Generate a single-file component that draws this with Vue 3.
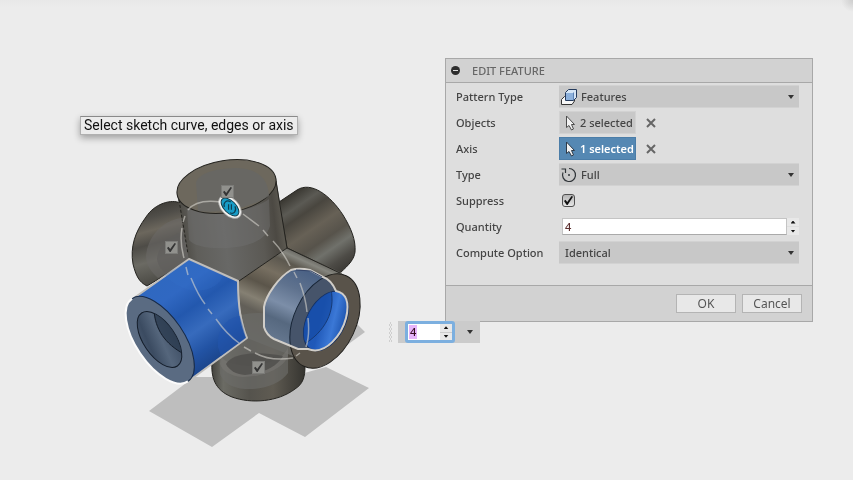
<script setup>
import { ref } from 'vue'

const patternType = ref('Features')
const distribution = ref('Full')
const computeOption = ref('Identical')
const suppress = ref(true)
const quantity = ref(4)
const instances = ref([
  { id: 'top', on: true },
  { id: 'left', on: true },
  { id: 'bottom', on: true },
])
const step = (by) => {
  quantity.value = Math.max(1, Number(quantity.value) + by)
}
</script>

<template>
  <main class="workspace">
    <section class="model" aria-label="Model view">
      <svg class="drawing" viewBox="120 150 260 305" aria-hidden="true">
        <defs>
          <linearGradient id="topSide" x1="178" y1="205" x2="284" y2="192" gradientUnits="userSpaceOnUse">
            <stop offset="0" stop-color="#4c4a44" />
            <stop offset=".12" stop-color="#5f5e5a" />
            <stop offset=".4" stop-color="#686866" />
            <stop offset=".75" stop-color="#5b5954" />
            <stop offset=".88" stop-color="#4c4943" />
            <stop offset=".96" stop-color="#5c5951" />
            <stop offset="1" stop-color="#403e38" />
          </linearGradient>
          <linearGradient id="backRight" x1="290" y1="195" x2="345" y2="275" gradientUnits="userSpaceOnUse">
            <stop offset="0" stop-color="#3a3832" />
            <stop offset=".14" stop-color="#5b5a54" />
            <stop offset=".24" stop-color="#49463f" />
            <stop offset=".42" stop-color="#676156" />
            <stop offset=".58" stop-color="#57534b" />
            <stop offset=".7" stop-color="#70716b" />
            <stop offset=".84" stop-color="#4d4b46" />
            <stop offset="1" stop-color="#35332f" />
          </linearGradient>
          <linearGradient id="backLeft" x1="150" y1="205" x2="172" y2="285" gradientUnits="userSpaceOnUse">
            <stop offset="0" stop-color="#3e3c37" />
            <stop offset=".15" stop-color="#504e49" />
            <stop offset=".3" stop-color="#6c675d" />
            <stop offset=".46" stop-color="#4e4c47" />
            <stop offset=".66" stop-color="#6b6a63" />
            <stop offset="1" stop-color="#42413c" />
          </linearGradient>
          <linearGradient id="frontRight" x1="287" y1="248" x2="247" y2="337" gradientUnits="userSpaceOnUse">
            <stop offset="0" stop-color="#6b6a64" />
            <stop offset=".05" stop-color="#85857e" />
            <stop offset=".13" stop-color="#5c584f" />
            <stop offset=".28" stop-color="#776f61" />
            <stop offset=".44" stop-color="#5b554a" />
            <stop offset=".6" stop-color="#858073" />
            <stop offset=".72" stop-color="#625f58" />
            <stop offset="1" stop-color="#666561" />
          </linearGradient>
          <linearGradient id="blueSide" x1="189" y1="259" x2="246" y2="339" gradientUnits="userSpaceOnUse">
            <stop offset="0" stop-color="#2f68c0" />
            <stop offset=".2" stop-color="#3068c2" />
            <stop offset=".42" stop-color="#2358ae" />
            <stop offset=".64" stop-color="#376bbd" />
            <stop offset=".84" stop-color="#2253a4" />
            <stop offset="1" stop-color="#1c468d" />
          </linearGradient>
          <linearGradient id="slate" x1="302" y1="270" x2="270" y2="342" gradientUnits="userSpaceOnUse">
            <stop offset="0" stop-color="#4b6285" />
            <stop offset=".25" stop-color="#5f728e" />
            <stop offset=".5" stop-color="#7c8ea8" />
            <stop offset=".7" stop-color="#56687f" />
            <stop offset="1" stop-color="#687a92" />
          </linearGradient>
          <linearGradient id="bore" x1="320" y1="292" x2="335" y2="350" gradientUnits="userSpaceOnUse">
            <stop offset="0" stop-color="#1d55b4" />
            <stop offset=".4" stop-color="#2059b9" />
            <stop offset=".62" stop-color="#3b78d6" />
            <stop offset=".8" stop-color="#2057b2" />
            <stop offset="1" stop-color="#2e69c5" />
          </linearGradient>
          <linearGradient id="hole" x1="160" y1="313" x2="150" y2="366" gradientUnits="userSpaceOnUse">
            <stop offset="0" stop-color="#35445a" />
            <stop offset=".45" stop-color="#55667c" />
            <stop offset=".7" stop-color="#3b4b61" />
            <stop offset="1" stop-color="#52637a" />
          </linearGradient>
          <linearGradient id="bottomSide" x1="212" y1="0" x2="306" y2="0" gradientUnits="userSpaceOnUse">
            <stop offset="0" stop-color="#45443f" />
            <stop offset=".12" stop-color="#6b6b64" />
            <stop offset=".4" stop-color="#55534d" />
            <stop offset=".65" stop-color="#5f5b52" />
            <stop offset="1" stop-color="#34332f" />
          </linearGradient>
          <clipPath id="selectedClip">
            <path d="M310 270C302 268 297 268 291 270C279 277 266 295 264 307V327C266 334 270 337 274 339L298 349L308 349C326 356 342 334 346 318C350 302 346 293 336 291C333 284 329 279 323 277Z" />
          </clipPath>
          <clipPath id="holeClip"><ellipse cx="159.500" cy="339.500" rx="32" ry="16" transform="rotate(56 159.500 339.500)" /></clipPath>
          <clipPath id="boreClip"><ellipse cx="326" cy="321" rx="32" ry="19" transform="rotate(-62 326 321)" /></clipPath>
        </defs>

        <path fill="#bebebe" d="M149 411L194 377H290L326 367L369 388L305 437L259 413L212 447ZM345 325H358L365 332L343 348Z" />

        <path fill="url(#backLeft)" stroke="#24231f" d="M180 203C172 199 155 203 146 217C135 232 130 247 133 264C136 276 139 282 147 286L190 260V205Z" />
        <path fill="#6b6a67" fill-opacity=".55" d="M182 218C162 220 147 238 146 256C146 264 150 271 158 278L190 260V218Z" />
        <path fill="#5f5e5b" fill-opacity=".6" d="M183 232C168 235 158 247 157 259C158 265 161 270 166 273L190 260Z" />
        <path fill="url(#backRight)" stroke="#24231f" d="M279 202L297 190C311 181 330 195 343 215C351 228 356 240 355 252C354 259 350 264 340 273L287 248Z" />

        <path fill="url(#bottomSide)" stroke="#24231f" d="M212 362C211 376 214 390 232 397C251 404 278 402 295 389C303 384 305 377 305 366L295 345L248 338Z" />

        <path fill="url(#frontRight)" d="M238 281L287 248L342 273L325 310L298 358L247 338L240 310Z" />
        <path fill="#6c6b68" fill-opacity=".65" d="M219 345C222 318 240 313 260 313C277 314 285 320 288 334V373C280 384 263 390 245 389C231 388 223 382 220 374Z" />
        <path fill="#787773" fill-opacity=".55" d="M221 356C228 370 278 370 288 348V356C284 368 264 377 243 377C229 376 222 370 220 364Z" />
        <path fill="#4f4e4b" fill-opacity=".8" d="M226 364C231 354 255 350 283 356C276 368 262 373 245 375C235 374 229 370 226 364Z" />

        <path fill="url(#topSide)" d="M177 193L189 260L239 281L287 248L276 178Z" />
        <path fill="#707172" fill-opacity=".45" d="M187 208C204 217 249 214 269 199L270 226C266 241 247 247 227 248C208 249 194 246 189 240Z" />
        <path fill="none" stroke="#24231f" d="M276 181L287 248L239 281M287 248L340 273" />
        <path fill="none" stroke="#24231f" stroke-dasharray="3 2" d="M179 200L188 254" />
        <ellipse cx="226.500" cy="186.500" rx="50" ry="26" transform="rotate(-9 226.500 186.500)" fill="#6d685d" stroke="#24231f" />
        <path fill="#676764" fill-opacity=".85" d="M196 183C198 174 212 169 235 168C254 168 268 175 269 196C250 208 219 214 198 211Z" />

        <ellipse cx="325" cy="321" rx="50" ry="31" transform="rotate(-65 325 321)" fill="#59534a" stroke="#1f1e1b" />
        <g clip-path="url(#selectedClip)">
          <rect x="260" y="265" width="92" height="92" fill="url(#slate)" />
          <ellipse cx="325" cy="321" rx="50" ry="31" transform="rotate(-65 325 321)" fill="#46546a" stroke="#172435" />
        </g>
        <ellipse cx="326" cy="321" rx="32" ry="19" transform="rotate(-62 326 321)" fill="url(#bore)" stroke="#172f5c" />
        <path clip-path="url(#boreClip)" fill="#154ba5" fill-opacity=".7" stroke="#173a75" d="M330 286C336 306 329 328 306 343L295 330L305 290Z" />
        <path fill="none" stroke="#d0cdc8" stroke-width="2" d="M310 270C302 268 297 268 291 270C279 277 266 295 264 307V327C266 334 270 337 274 339L298 349L308 349C326 356 342 334 346 318C350 302 346 293 336 291C333 284 329 279 323 277Z" />
        <path fill="none" stroke="#35466a" d="M296 270L311 271L322 277" />

        <path fill="url(#blueSide)" stroke="#c0bebb" stroke-width="2" stroke-linejoin="round" d="M189 259L238 281C238 304 241 325 247 338L190 380L160 350L134 298Z" />
        <path fill="#3971cc" fill-opacity=".2" d="M165 275L189 260L223 275C220 290 188 301 165 275Z" />
        <path fill="#2255ae" fill-opacity=".55" d="M218 347C217 330 225 318 240 316L246 338L221 356Z" />
        <ellipse cx="160" cy="340" rx="50" ry="24" transform="rotate(56 160 340)" fill="#5a6b82" />
        <ellipse cx="160" cy="340" rx="50" ry="24" transform="rotate(56 160 340)" pathLength="100" fill="none" stroke="#fbfbfb" stroke-width="2" stroke-dasharray="50 50" />
        <ellipse cx="160" cy="340" rx="50" ry="24" transform="rotate(56 160 340)" pathLength="100" fill="none" stroke="#172a47" stroke-dasharray="0 50 50 0" />
        <ellipse cx="159.500" cy="339.500" rx="32" ry="16" transform="rotate(56 159.500 339.500)" fill="url(#hole)" stroke="#141d2a" />
        <path clip-path="url(#holeClip)" fill="#2a394e" fill-opacity=".75" stroke="#141d2a" d="M154 310C155 329 165 344 184 354L200 330L170 300Z" />

        <g fill="none" stroke="#d5d3cd" stroke-width="1.500" stroke-opacity=".6">
          <path d="M221 202C207 200 194 202 188 210M185 216L183 222M182 228C180 239 182 251 184 258M186 267L188 275M191 278C196 290 201 299 205 304M208 309L212 314M216 319C223 329 232 338 239 343M244 347L251 351M255 353C266 359 281 360 293 358M296 356L300 353M306 347C309 338 309 327 308 318M307 312C306 301 303 291 300 283M297 278L294 272M290 266C285 256 279 247 273 241M268 236L263 230M259 226L243 214" />
        </g>

        <g transform="translate(230 207) rotate(45)">
          <ellipse rx="14" ry="9" fill="#fff" fill-opacity=".5" />
          <ellipse rx="13" ry="8" fill="#f7f7f5" />
          <ellipse rx="11" ry="6" fill="#189cc7" stroke="#123c4b" />
          <path fill="none" stroke="#103f52" stroke-width="1.200" d="M-3 -4C-8 -3 -8 2 -4 4M3 -4C8 -2 8 3 4 4M-3 -1L1 3M-1 -3L3 1" />
        </g>
      </svg>
      <input
        v-for="item in instances"
        :key="item.id"
        v-model="item.on"
        type="checkbox"
        class="tick marker"
        :class="item.id"
        :aria-label="`Keep ${item.id} instance`"
      />
    </section>

    <p class="tip" role="tooltip">Select sketch curve, edges or axis</p>

    <form class="panel" @submit.prevent>
      <header class="panel-head">
        <button type="button" class="collapse" aria-label="Collapse"></button>
        <h1>EDIT FEATURE</h1>
      </header>

      <div class="rows">
        <div class="row">
          <label for="pattern">Pattern Type</label>
          <div class="drop">
            <svg class="lead" viewBox="0 0 18 18" aria-hidden="true">
              <path fill="#f7f7f7" stroke="#333" d="M1.500 11.500L4.500 8.500H14.500V13L12 16.500H1.500Z" />
              <path fill="#d5e5f6" stroke="#243a5c" d="M5.500 4.500L8.500 1.500H16.500V9.500L13.500 12.500H5.500Z" />
              <path fill="#8db1dc" d="M6 5H13V12H6Z" />
              <path fill="none" stroke="#5d83b5" d="M13.500 4.500V12" />
            </svg>
            <select id="pattern" v-model="patternType" class="with-icon">
              <option>Features</option>
              <option>Faces</option>
              <option>Bodies</option>
            </select>
          </div>
        </div>

        <div class="row">
          <span>Objects</span>
          <div class="picks">
            <button type="button" class="pick">
              <svg class="arrow" viewBox="0 0 11 16" aria-hidden="true">
                <path fill="#f2f2f2" stroke="#4c4c4c" d="M1.500 1V12.500L4 10.500L6.500 15L8.500 14L6.500 9.500H9.500Z" />
              </svg>
              2 selected
            </button>
            <button type="button" class="clear" aria-label="Clear objects">
              <svg viewBox="0 0 10 10" aria-hidden="true"><path d="M1 1L9 9M9 1L1 9" /></svg>
            </button>
          </div>
        </div>

        <div class="row">
          <span>Axis</span>
          <div class="picks">
            <button type="button" class="pick active">
              <svg class="arrow" viewBox="0 0 11 16" aria-hidden="true">
                <path fill="#f2f2f2" stroke="#2d3a48" d="M1.500 1V12.500L4 10.500L6.500 15L8.500 14L6.500 9.500H9.500Z" />
              </svg>
              1 selected
            </button>
            <button type="button" class="clear" aria-label="Clear axis">
              <svg viewBox="0 0 10 10" aria-hidden="true"><path d="M1 1L9 9M9 1L1 9" /></svg>
            </button>
          </div>
        </div>

        <div class="row">
          <label for="type">Type</label>
          <div class="drop">
            <svg class="lead" viewBox="0 0 18 18" aria-hidden="true">
              <path fill="none" stroke="#2f3438" stroke-width="1.200" d="M9 2.500A6.500 6.500 0 1 1 3 6.500M1.500 3H5.500V7" />
              <circle cx="9" cy="9" r="1" fill="#2f3438" />
            </svg>
            <select id="type" v-model="distribution" class="with-icon">
              <option>Full</option>
              <option>Angle</option>
              <option>Symmetric</option>
            </select>
          </div>
        </div>

        <div class="row">
          <label for="suppress">Suppress</label>
          <input id="suppress" v-model="suppress" type="checkbox" class="tick" />
        </div>

        <div class="row">
          <label for="quantity">Quantity</label>
          <div class="number">
            <input id="quantity" v-model="quantity" type="text" inputmode="numeric" />
            <div class="spin">
              <button type="button" class="up" aria-label="Increase" @click="step(1)"></button>
              <button type="button" class="down" aria-label="Decrease" @click="step(-1)"></button>
            </div>
          </div>
        </div>

        <div class="row">
          <label for="compute">Compute Option</label>
          <div class="drop">
            <select id="compute" v-model="computeOption">
              <option>Identical</option>
              <option>Optimized</option>
              <option>Adjust</option>
            </select>
          </div>
        </div>
      </div>

      <footer class="panel-foot">
        <button type="submit" class="action">OK</button>
        <button type="button" class="action">Cancel</button>
      </footer>
    </form>

    <div class="floating">
      <span class="grip" aria-hidden="true"></span>
      <div class="floating-body">
        <div class="number focused">
          <input v-model="quantity" type="text" inputmode="numeric" aria-label="Quantity" />
          <mark aria-hidden="true"></mark>
          <div class="spin">
            <button type="button" class="up" aria-label="Increase" @click="step(1)"></button>
            <button type="button" class="down" aria-label="Decrease" @click="step(-1)"></button>
          </div>
        </div>
        <button type="button" class="more" aria-label="More options"></button>
      </div>
    </div>
  </main>
</template>

<style>
body {
  background: #ececec;
}
</style>

<style scoped>
* {
  box-sizing: border-box;
}

.workspace {
  position: relative;
  min-height: 100vh;
  overflow: hidden;
  background:
    radial-gradient(circle at 100% 0, #cecece 0, #ececec00 12px),
    linear-gradient(#e8e8e8, #ececec 7px);
  color: #444;
  font: 500 11px/16px "Noto Sans", "Open Sans", sans-serif;
}

button,
input,
select {
  margin: 0;
  padding: 0;
  border: 0;
  border-radius: 0;
  background: none;
  color: inherit;
  font: inherit;
  appearance: none;
  outline: none;
}

.model {
  position: absolute;
  left: 120px;
  top: 150px;
  width: 260px;
}

.drawing {
  display: block;
  width: 100%;
}

.tick {
  display: grid;
  place-items: center;
  width: 13px;
  height: 13px;
  margin-left: 3px;
  border: 1px solid #505050;
  border-radius: 3px;
  background: linear-gradient(#b5b5b5, #e6e6e6);
}

.tick:checked::after {
  content: "";
  width: 9px;
  height: 9px;
  background: #111;
  clip-path: polygon(0 55%, 16% 42%, 36% 68%, 84% 0, 100% 8%, 40% 100%, 30% 100%);
}

.marker {
  position: absolute;
  margin: 0;
  border: 1px solid #7c7c79;
  border-radius: 0;
  background: #91918d;
}

.marker:checked::after {
  background: #353535;
}

.marker.top {
  left: 101px;
  top: 35px;
}

.marker.left {
  left: 45px;
  top: 91px;
}

.marker.bottom {
  left: 132px;
  top: 211px;
}

.tip {
  position: absolute;
  left: 80px;
  top: 116px;
  margin: 0;
  padding: 0 3px;
  border: 1px solid #b0b0b0;
  border-top-color: #8a8a8a;
  background: #ececec;
  box-shadow: 0 3px 7px #0005;
  color: #111;
  font: 400 14px/17px Roboto, Inter, sans-serif;
  white-space: nowrap;
}

.panel {
  position: absolute;
  right: 40px;
  top: 58px;
  width: 368px;
  border: 1px solid #a8a8a8;
  background: #dedede;
}

.panel-head {
  display: flex;
  align-items: center;
  gap: 12px;
  height: 24px;
  padding: 0 5px;
  border-bottom: 1px solid #a8a8a8;
  background: #d2d2d2;
}

.panel-head h1 {
  margin: 0;
  color: #666;
  font-size: 11px;
  font-weight: 500;
}

.collapse {
  display: grid;
  place-items: center;
  width: 9px;
  height: 9px;
  border-radius: 50%;
  background: #2d2d2d;
}

.collapse::after {
  content: "";
  width: 5px;
  height: 1px;
  background: #ddd;
}

.rows {
  display: grid;
  gap: 3px;
  padding: 2px 13px 21px 10px;
}

.row {
  display: grid;
  grid-template-columns: 103px 1fr;
  align-items: center;
  height: 23px;
}

.drop {
  position: relative;
  height: 23px;
  border: 1px solid #d2d2d2;
  border-width: 1px 0;
  background: #c8c8c8;
}

.drop select {
  display: block;
  width: 100%;
  height: 100%;
  padding: 0 20px 0 6px;
}

.drop .with-icon {
  padding-left: 22px;
}

.drop::after,
.more::after {
  content: "";
  width: 6px;
  height: 4px;
  background: #333;
  clip-path: polygon(0 0, 100% 0, 50% 100%);
}

.drop::after {
  position: absolute;
  right: 5px;
  top: 9px;
  pointer-events: none;
}

.lead {
  position: absolute;
  left: 1px;
  top: 2px;
  width: 18px;
  height: 18px;
  pointer-events: none;
}

.picks {
  display: flex;
  align-items: center;
  gap: 10px;
}

.pick {
  display: flex;
  align-items: center;
  gap: 4px;
  width: 77px;
  height: 23px;
  padding-left: 5px;
  border: 1px solid #d2d2d2;
  background: #c8c8c8;
  white-space: nowrap;
}

.pick.active {
  border-color: #4b7da8;
  background: #5588b3;
  color: #fff;
  font-weight: 600;
}

.arrow {
  flex: none;
  width: 11px;
  height: 16px;
}

.clear {
  width: 10px;
  height: 10px;
}

.clear svg {
  display: block;
  fill: none;
  stroke: #666;
  stroke-width: 2;
}

.number {
  display: flex;
  height: 17px;
  margin-left: 3px;
}

.number input {
  flex: 1;
  min-width: 0;
  padding-left: 2px;
  border: 1px solid #c4c4c4;
  border-bottom-color: #aaa;
  background: #fff;
  color: #5d3030;
}

.spin {
  display: grid;
  gap: 1px;
  width: 12px;
}

.spin button {
  display: grid;
  place-items: center;
  background: #e8e8e8;
}

.spin button::after {
  content: "";
  width: 5px;
  height: 3px;
  background: #111;
}

.spin .up::after {
  clip-path: polygon(50% 0, 100% 100%, 0 100%);
}

.spin .down::after {
  clip-path: polygon(0 0, 100% 0, 50% 100%);
}

.panel-foot {
  display: flex;
  justify-content: flex-end;
  gap: 6px;
  padding: 8px 10px;
  border-top: 1px solid #a8a8a8;
  background: #d2d2d2;
}

.action {
  width: 60px;
  height: 19px;
  border: 1px solid #b4b4b4;
  background: #e8e8e8;
  color: #555;
  font-size: 12px;
  font-weight: 400;
  line-height: 17px;
}

.floating {
  position: absolute;
  left: 389px;
  top: 321px;
  display: flex;
  align-items: center;
  gap: 6px;
}

.grip {
  width: 3px;
  height: 20px;
  background: repeating-conic-gradient(#cfcfcf 0 25%, #ececec 0 50%) 0 0 / 2px 4px;
}

.floating-body {
  display: flex;
  align-items: center;
  gap: 11px;
  width: 82px;
  height: 22px;
  padding-left: 7px;
  background: #cbcbcb;
}

.focused {
  position: relative;
  width: 50px;
  height: 22px;
  margin: 0;
  border: 3px solid #7cafdf;
  border-radius: 3px;
}

.focused input {
  border: 0;
  color: #3d1020;
}

.focused mark {
  position: absolute;
  left: 1px;
  top: 1px;
  width: 8px;
  height: 14px;
  background: #e6b4fa;
  mix-blend-mode: multiply;
  pointer-events: none;
}

.more {
  display: grid;
  place-items: center;
  width: 8px;
  height: 22px;
}
</style>
